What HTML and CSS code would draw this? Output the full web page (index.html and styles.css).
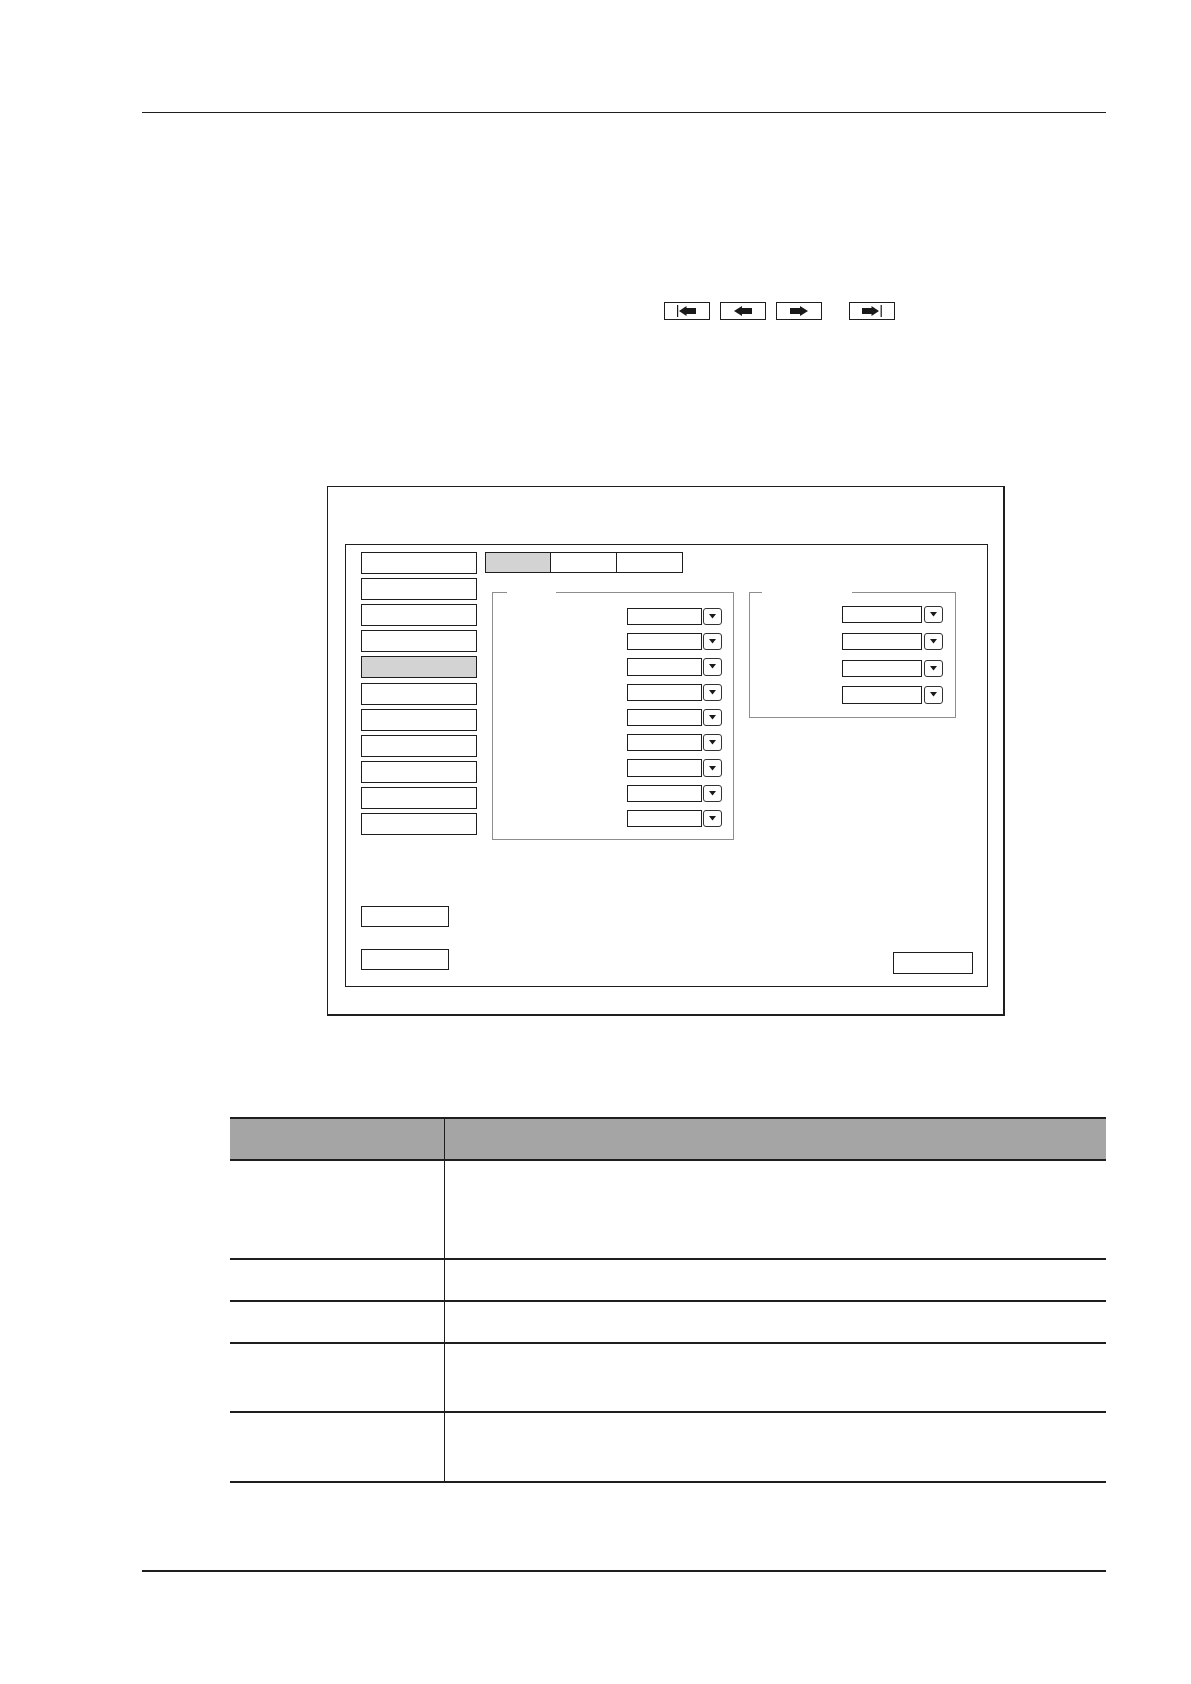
FILE: index.html
```html
<!DOCTYPE html>
<html lang="en">
<head>
<meta charset="utf-8">
<title>Settings dialog</title>
<link rel="stylesheet" href="styles.css">
</head>
<body>
<div class="page">
  <div class="rule-top"></div>

  <div class="nav-row">
    <div class="nav-btn">
      <svg width="20" height="12" viewBox="0 0 20 12"><rect x="0" y="0" width="1.2" height="12" fill="#1a1a1a"/><polygon points="2,6 9.5,1 9.5,3 19,3 19,9 9.5,9 9.5,11" fill="#1a1a1a"/></svg>
    </div>
    <div class="nav-btn">
      <svg width="18" height="12" viewBox="0 0 18 12"><polygon points="0,6 8,1 8,3 18,3 18,9 8,9 8,11" fill="#1a1a1a"/></svg>
    </div>
    <div class="nav-btn">
      <svg width="18" height="12" viewBox="0 0 18 12"><polygon points="18,6 10,1 10,3 0,3 0,9 10,9 10,11" fill="#1a1a1a"/></svg>
    </div>
    <div class="nav-btn nav-last">
      <svg width="20" height="12" viewBox="0 0 20 12"><polygon points="17,6 9.5,1 9.5,3 0,3 0,9 9.5,9 9.5,11" fill="#1a1a1a"/><rect x="18.6" y="0" width="1.2" height="12" fill="#1a1a1a"/></svg>
    </div>
  </div>

  <div class="dialog">
    <div class="panel">
      <div class="side">
        <div class="menu">
          <div class="menu-item"></div>
          <div class="menu-item"></div>
          <div class="menu-item"></div>
          <div class="menu-item"></div>
          <div class="menu-item is-active"></div>
          <div class="menu-item"></div>
          <div class="menu-item"></div>
          <div class="menu-item"></div>
          <div class="menu-item"></div>
          <div class="menu-item"></div>
          <div class="menu-item"></div>
        </div>
        <div class="side-btn side-btn-a"></div>
        <div class="side-btn side-btn-b"></div>
      </div>

      <div class="main">
        <div class="tabs">
          <div class="tab is-active"></div>
          <div class="tab"></div>
          <div class="tab"></div>
        </div>

        <div class="groups">
          <div class="group group-a">
            <div class="combo"><div class="combo-field"></div><div class="combo-btn"><svg width="7" height="5" viewBox="0 0 7 5"><path d="M0 0H7L3.5 4.6Z" fill="#1a1a1a"/></svg></div></div>
            <div class="combo"><div class="combo-field"></div><div class="combo-btn"><svg width="7" height="5" viewBox="0 0 7 5"><path d="M0 0H7L3.5 4.6Z" fill="#1a1a1a"/></svg></div></div>
            <div class="combo"><div class="combo-field"></div><div class="combo-btn"><svg width="7" height="5" viewBox="0 0 7 5"><path d="M0 0H7L3.5 4.6Z" fill="#1a1a1a"/></svg></div></div>
            <div class="combo"><div class="combo-field"></div><div class="combo-btn"><svg width="7" height="5" viewBox="0 0 7 5"><path d="M0 0H7L3.5 4.6Z" fill="#1a1a1a"/></svg></div></div>
            <div class="combo"><div class="combo-field"></div><div class="combo-btn"><svg width="7" height="5" viewBox="0 0 7 5"><path d="M0 0H7L3.5 4.6Z" fill="#1a1a1a"/></svg></div></div>
            <div class="combo"><div class="combo-field"></div><div class="combo-btn"><svg width="7" height="5" viewBox="0 0 7 5"><path d="M0 0H7L3.5 4.6Z" fill="#1a1a1a"/></svg></div></div>
            <div class="combo"><div class="combo-field"></div><div class="combo-btn"><svg width="7" height="5" viewBox="0 0 7 5"><path d="M0 0H7L3.5 4.6Z" fill="#1a1a1a"/></svg></div></div>
            <div class="combo"><div class="combo-field"></div><div class="combo-btn"><svg width="7" height="5" viewBox="0 0 7 5"><path d="M0 0H7L3.5 4.6Z" fill="#1a1a1a"/></svg></div></div>
            <div class="combo"><div class="combo-field"></div><div class="combo-btn"><svg width="7" height="5" viewBox="0 0 7 5"><path d="M0 0H7L3.5 4.6Z" fill="#1a1a1a"/></svg></div></div>
          </div>
          <div class="group group-b">
            <div class="combo"><div class="combo-field"></div><div class="combo-btn"><svg width="7" height="5" viewBox="0 0 7 5"><path d="M0 0H7L3.5 4.6Z" fill="#1a1a1a"/></svg></div></div>
            <div class="combo"><div class="combo-field"></div><div class="combo-btn"><svg width="7" height="5" viewBox="0 0 7 5"><path d="M0 0H7L3.5 4.6Z" fill="#1a1a1a"/></svg></div></div>
            <div class="combo"><div class="combo-field"></div><div class="combo-btn"><svg width="7" height="5" viewBox="0 0 7 5"><path d="M0 0H7L3.5 4.6Z" fill="#1a1a1a"/></svg></div></div>
            <div class="combo"><div class="combo-field"></div><div class="combo-btn"><svg width="7" height="5" viewBox="0 0 7 5"><path d="M0 0H7L3.5 4.6Z" fill="#1a1a1a"/></svg></div></div>
          </div>
        </div>

        <div class="ok-btn"></div>
      </div>
    </div>
  </div>

  <table class="desc">
    <thead>
      <tr class="row-head"><th class="col-name"></th><th class="col-desc"></th></tr>
    </thead>
    <tbody>
      <tr class="row-1"><td class="col-name"></td><td class="col-desc"></td></tr>
      <tr class="row-2"><td class="col-name"></td><td class="col-desc"></td></tr>
      <tr class="row-3"><td class="col-name"></td><td class="col-desc"></td></tr>
      <tr class="row-4"><td class="col-name"></td><td class="col-desc"></td></tr>
      <tr class="row-5"><td class="col-name"></td><td class="col-desc"></td></tr>
    </tbody>
  </table>

  <div class="rule-bottom"></div>
</div>
</body>
</html>
```

FILE: styles.css
```css
* { box-sizing: border-box; }

html, body {
  margin: 0;
  padding: 0;
  background: #ffffff;
  font-family: "Liberation Sans", Arial, sans-serif;
}

.page {
  width: 1191px;
  padding: 0 85px 40px 142px;
}

.rule-top {
  margin-top: 111.5px;
  border-top: 1.4px solid #1e1e1e;
}

/* navigation buttons */
.nav-row {
  display: flex;
  gap: 10px;
  margin-top: 189.5px;
  padding-left: 522.3px;
}

.nav-btn {
  width: 46px;
  height: 18px;
  border: 1.5px solid #1e1e1e;
  display: flex;
  align-items: center;
  justify-content: center;
}

.nav-btn svg { display: block; }

.nav-last { margin-left: 17px; }

/* dialog */
.dialog {
  margin-top: 165.9px;
  margin-left: 185px;
  width: 678px;
  height: 530.6px;
  border-style: solid;
  border-color: #1e1e1e;
  border-width: 1.2px 2.5px 2.5px 1.2px;
  padding: 57px 15.5px 27px 17px;
}

.panel {
  height: 100%;
  border: 1.5px solid #1e1e1e;
  padding: 7px 13.5px 12.5px 14.8px;
  display: flex;
}

.side {
  width: 116.5px;
  display: flex;
  flex-direction: column;
}

.menu {
  display: flex;
  flex-direction: column;
  gap: 4.14px;
}

.menu-item {
  height: 22px;
  border: 1.5px solid #1e1e1e;
  background: #ffffff;
}

.menu-item.is-active { background: #d3d3d3; }

.side-btn {
  width: 88.3px;
  height: 21.7px;
  border: 1.4px solid #1e1e1e;
}

.side-btn-a { margin-top: 70.6px; }
.side-btn-b { margin-top: 21.3px; }

.main {
  flex: 1;
  margin-left: 7.5px;
  display: flex;
  flex-direction: column;
}

.tabs { display: flex; }

.tab {
  width: 67px;
  height: 21.4px;
  border: 1.5px solid #1e1e1e;
  background: #ffffff;
}

.tab + .tab { margin-left: -1.5px; }

.tab.is-active { background: #d3d3d3; }

.groups {
  display: flex;
  align-items: flex-start;
  gap: 15px;
  margin-top: 18.8px;
  margin-left: 7.1px;
}

.group {
  position: relative;
  border: 1.2px solid #8e8e8e;
  display: flex;
  flex-direction: column;
  align-items: flex-end;
}

.group::before {
  content: "";
  position: absolute;
  top: -2px;
  height: 3px;
  background: #ffffff;
}

.group-a {
  width: 242px;
  height: 247.5px;
  padding: 14.6px 11.3px 0 0;
  gap: 7.9px;
}

.group-a::before { left: 14.2px; width: 49.3px; }

.group-b {
  width: 207.4px;
  height: 126px;
  padding: 12.9px 12.7px 0 0;
  gap: 9.6px;
}

.group-b::before { left: 12.2px; width: 89.6px; }

.combo {
  display: flex;
  align-items: stretch;
  gap: 0.6px;
}

.group-a .combo { height: 17.4px; }
.group-b .combo { height: 17.2px; gap: 1.6px; }

.combo-field {
  border: 1.3px solid #1e1e1e;
  background: #ffffff;
}

.group-a .combo-field { width: 75.7px; }
.group-b .combo-field { width: 80.7px; }

.combo-btn {
  width: 18.7px;
  border: 1.3px solid #333333;
  border-radius: 3px;
  background: #ffffff;
  display: flex;
  align-items: center;
  justify-content: center;
}

.combo-btn svg { display: block; }

.ok-btn {
  margin-top: auto;
  align-self: flex-end;
  width: 80.3px;
  height: 22.3px;
  border: 1.4px solid #1e1e1e;
}

/* description table */
.desc {
  margin-top: 101px;
  margin-left: 88px;
  width: 876px;
  border-collapse: collapse;
  table-layout: fixed;
}

.desc th, .desc td {
  padding: 0;
  border-bottom: 2px solid #1e1e1e;
}

.desc thead th {
  border-top: 2px solid #1e1e1e;
  background: #a6a5a5;
}

.desc .col-name {
  width: 214px;
  border-right: 1.5px solid #1e1e1e;
}

.row-head { height: 42px; }
.row-1 { height: 99px; }
.row-2 { height: 42px; }
.row-3 { height: 42px; }
.row-4 { height: 69px; }
.row-5 { height: 70px; }

.rule-bottom {
  margin-top: 86.5px;
  border-top: 2.4px solid #1e1e1e;
}
```
